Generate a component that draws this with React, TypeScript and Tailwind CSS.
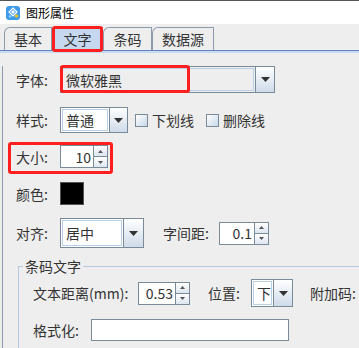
import type { ReactNode } from "react";

const FONT = '"Noto Sans CJK SC", "Liberation Sans", sans-serif';

function Tri() {
  return (
    <svg height="5" viewBox="0 0 9 5" width="9">
      <polygon fill="#333" points="0,0 9,0 4.5,5" />
    </svg>
  );
}

function Combo({ box, btn, text }: { box: string; btn: string; text: string }) {
  return (
    <div className={`flex border border-[#7a8a99] bg-[#eeeeee] ${box}`}>
      <div className="m-px flex flex-1 items-center border border-[#b8cfe5] pl-[3px]">
        {text}
      </div>
      <div
        className={`flex items-center justify-center border-l border-[#7a8a99] bg-gradient-to-b from-white to-[#cfdbe9] ${btn}`}
      >
        <Tri />
      </div>
    </div>
  );
}

function Spinner({ field, value }: { field: string; value: string }) {
  return (
    <div className="flex h-[23px]">
      <div
        className={`flex items-center justify-end border border-r-0 border-[#7a8a99] bg-white pr-[2px] ${field}`}
      >
        {value}
      </div>
      <div className="flex w-[15px] flex-col border border-[#7a8a99]">
        <div className="flex flex-1 items-center justify-center border-b border-[#7a8a99] bg-gradient-to-b from-white to-[#dde6f0]">
          <svg height="3" viewBox="0 0 5 3" width="5">
            <polygon fill="#555" points="0,3 5,3 2.5,0" />
          </svg>
        </div>
        <div className="flex flex-1 items-center justify-center bg-gradient-to-b from-white to-[#dde6f0]">
          <svg height="3" viewBox="0 0 5 3" width="5">
            <polygon fill="#555" points="0,0 5,0 2.5,3" />
          </svg>
        </div>
      </div>
    </div>
  );
}

function Check({ label }: { label: string }) {
  return (
    <div className="flex items-center">
      <div className="h-[13px] w-[13px] border border-[#7a8a99] bg-gradient-to-br from-white to-[#c9d8ea]" />
      <span className="ml-[4px]">{label}</span>
    </div>
  );
}

function Tab({ children, w, active }: { children: ReactNode; w: string; active?: boolean }) {
  return (
    <div
      className={`flex h-[23px] items-center justify-center rounded-tl-[6px] border border-b-0 border-[#8c9aab] ${w} ${
        active ? "bg-[#c5d8ef]" : "bg-[#eeeeee]"
      }`}
    >
      {children}
    </div>
  );
}

export default function App() {
  return (
    <div
      className="relative h-[348px] w-[359px] overflow-hidden bg-[#eeeeee] text-[14px] leading-none text-[#333]"
      style={{ fontFamily: FONT }}
    >
      {/* title bar */}
      <div className="flex h-[24px] items-center border-t border-[#555] bg-white pl-[6px]">
        <svg height="14" viewBox="0 0 14 14" width="14">
          <rect fill="#3f9be6" height="14" rx="3" width="14" />
          <path d="M7 2 L11 6 L7 10 L3 6 Z" fill="none" stroke="#fff" strokeWidth="1.2" />
          <path d="M5 6 L7 4 L9 6 L7 8 Z" fill="#fff" />
          <circle cx="10.5" cy="10" fill="#e6c230" r="1.8" />
          <circle cx="4" cy="10.5" fill="#8fd0ff" r="1.3" />
        </svg>
        <span className="ml-[6px] text-[12px] text-black">图形属性</span>
      </div>

      {/* tabs */}
      <div className="flex h-[26px] items-end pl-[4px]">
        <Tab w="w-[48px]">基本</Tab>
        <Tab active w="w-[51px]">文字</Tab>
        <Tab w="w-[49px]">条码</Tab>
        <Tab w="w-[62px]">数据源</Tab>
      </div>
      <div className="h-px bg-[#6382bf]" />
      <div className="h-[2px] bg-[#c8daf0]" />

      {/* panel */}
      <div className="ml-[2px] h-[300px] border-l border-[#8c9aab]">
        <div className="ml-[13px] mt-[13px] flex h-[27px] items-center">
          <span className="w-[44px]">字体:</span>
          <Combo box="h-[27px] w-[215px]" btn="w-[19px]" text="微软雅黑" />
        </div>

        <div className="ml-[13px] mt-[14px] flex h-[26px] items-center">
          <span className="w-[44px]">样式:</span>
          <Combo box="h-[26px] w-[68px] bg-white" btn="w-[18px]" text="普通" />
          <div className="ml-[7px]">
            <Check label="下划线" />
          </div>
          <div className="ml-[12px]">
            <Check label="删除线" />
          </div>
        </div>

        <div className="ml-[13px] mt-[12px] flex h-[23px] items-center">
          <span className="w-[44px]">大小:</span>
          <Spinner field="w-[33px]" value="10" />
        </div>

        <div className="ml-[13px] mt-[14px] flex h-[23px] items-center">
          <span className="w-[44px]">颜色:</span>
          <div className="h-[23px] w-[24px] border border-[#555] bg-black" />
        </div>

        <div className="ml-[13px] mt-[13px] flex h-[30px] items-center">
          <span className="w-[44px]">对齐:</span>
          <Combo box="h-[30px] w-[84px] bg-white" btn="w-[20px]" text="居中" />
          <span className="ml-[19px] w-[56px]">字间距:</span>
          <Spinner field="w-[35px]" value="0.1" />
        </div>

        <fieldset className="ml-[15px] mt-[11px] border-l border-t border-[#b8c8dc] pb-[20px]">
          <legend className="ml-[4px] px-[2px] leading-[14px]">条码文字</legend>
          <div className="ml-[14px] mt-[6px] flex h-[28px] items-center">
            <span className="w-[105px]">文本距离(mm):</span>
            <Spinner field="w-[37px]" value="0.53" />
            <span className="ml-[18px] w-[43px]">位置:</span>
            <Combo box="h-[28px] w-[42px] bg-white" btn="w-[20px]" text="下" />
            <span className="ml-[17px] whitespace-nowrap">附加码:</span>
          </div>
          <div className="ml-[14px] mt-[12px] flex h-[22px] items-center">
            <span className="w-[58px]">格式化:</span>
            <div className="h-[22px] w-[198px] border border-[#7a8a99] bg-white" />
          </div>
        </fieldset>
      </div>

      {/* red annotation boxes */}
      <div className="absolute left-[52px] top-[26px] h-[26px] w-[51px] rounded-[3px] border-[3px] border-[#ff1f1f]" />
      <div className="absolute left-[60px] top-[65px] h-[28px] w-[130px] rounded-[3px] border-[3px] border-[#ff1f1f]" />
      <div className="absolute left-[8px] top-[142px] h-[32px] w-[105px] rounded-[3px] border-[3px] border-[#ff1f1f]" />
    </div>
  );
}
